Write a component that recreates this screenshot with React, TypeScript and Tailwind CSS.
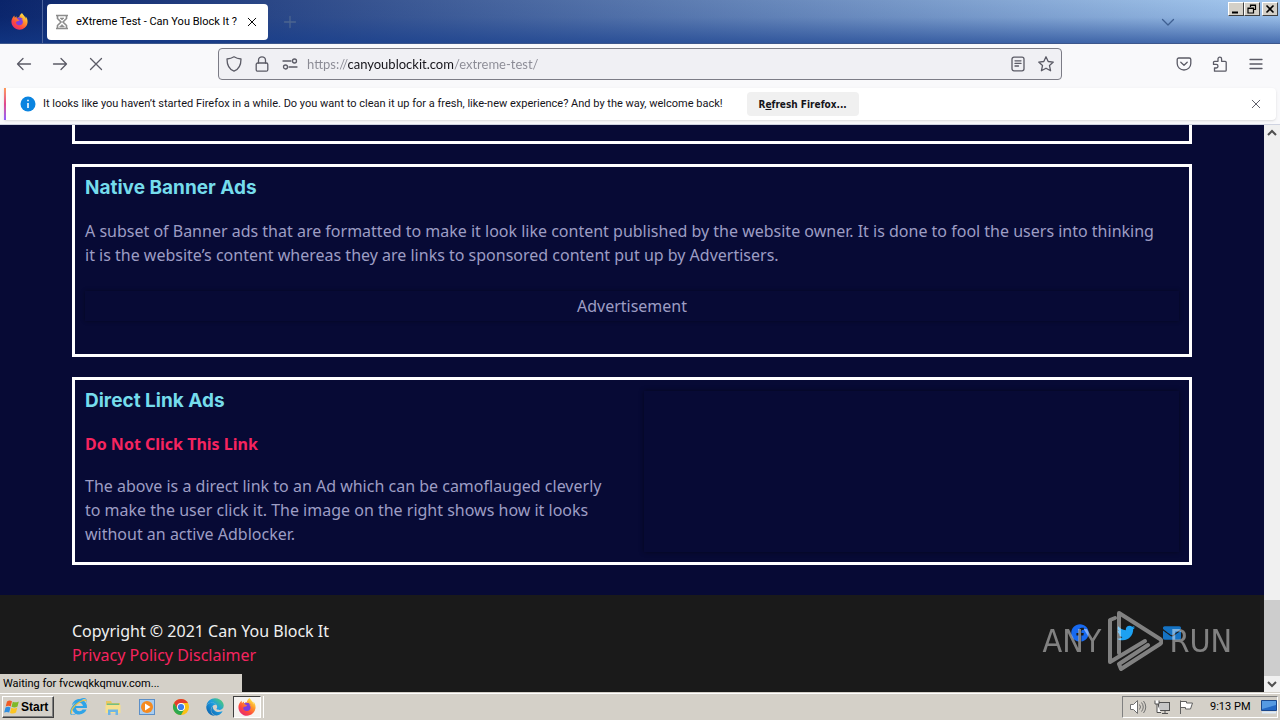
import React, { useState } from "react";
import { FaEdge, FaEnvelope, FaFacebook, FaFirefoxBrowser, FaInternetExplorer, FaTwitter } from "react-icons/fa";

const stroke = {
  fill: "none",
  stroke: "currentColor",
  strokeWidth: 1.3,
  strokeLinecap: "round" as const,
  strokeLinejoin: "round" as const,
};

function Icon({ children, className = "size-4" }: { children: React.ReactNode; className?: string }) {
  return (
    <svg viewBox="0 0 16 16" className={className} aria-hidden="true" {...stroke}>
      {children}
    </svg>
  );
}

function FirefoxLogo({ id, className }: { id: string; className: string }) {
  return (
    <svg viewBox="0 0 20 20" className={className} aria-hidden="true">
      <defs>
        <linearGradient id={id} x1="0.85" y1="0.05" x2="0.2" y2="0.95">
          <stop offset="0" stopColor="#fff44f" />
          <stop offset="0.35" stopColor="#ff9a2a" />
          <stop offset="0.7" stopColor="#ff4a3c" />
          <stop offset="1" stopColor="#e62a72" />
        </linearGradient>
      </defs>
      <circle cx="10" cy="10.5" r="5.5" fill="#7b3fe0" />
      <FaFirefoxBrowser size={20} fill={`url(#${id})`} />
    </svg>
  );
}

function ToolButton({ label, children }: { label: string; children: React.ReactNode }) {
  return (
    <button aria-label={label} className="flex size-9 items-center justify-center text-[#5b5b66]">
      {children}
    </button>
  );
}

function WindowButton({ label, children }: { label: string; children: React.ReactNode }) {
  return (
    <button
      aria-label={label}
      className="flex h-[14px] w-4 items-center justify-center border border-t-white border-l-white border-r-[#404040] border-b-[#404040] bg-[#d4d0c8] text-black"
    >
      <svg viewBox="0 0 12 10" className="h-[10px] w-3" fill="none" stroke="currentColor" strokeWidth="1.6" aria-hidden="true">
        {children}
      </svg>
    </button>
  );
}

function TabBar() {
  return (
    <header className="flex h-11 shrink-0 items-stretch border-b border-[#3d578c] bg-[linear-gradient(to_bottom,rgba(20,60,140,0)_0%,rgba(20,60,140,0.1)_40%,rgba(20,60,140,0.65)_100%),linear-gradient(to_right,#0a246a,#a6caf0)]">
      <button aria-label="Firefox View" className="flex w-[43px] items-center justify-center border-r border-[#4d659e] pr-1">
        <FirefoxLogo id="ff-view" className="size-[17px]" />
      </button>
      <div className="mt-1 mb-[3px] ml-1 flex w-[221px] items-center rounded bg-white pl-2 pr-2 text-black">
        <svg viewBox="0 0 14 16" className="h-4 w-[14px]" fill="none" stroke="#8c8c8c" strokeWidth="1.6" aria-hidden="true">
          <path d="M1 1.500h12M1 14.500h12M2.500 2v2.500L6 8l-3.500 3.500V14M11.500 2v2.500L8 8l3.500 3.500V14" />
          <path d="M5 4h4L7 6zM4.500 13L7 10.500 9.500 13z" fill="#8c8c8c" strokeWidth="0.6" />
        </svg>
        <span className="ml-[7px] flex-1 whitespace-nowrap">eXtreme Test - Can You Block It ?</span>
        <button aria-label="Close tab" className="flex size-4 items-center justify-center">
          <Icon className="size-3">
            <path d="M3 3l10 10M13 3L3 13" />
          </Icon>
        </button>
      </div>
      <button aria-label="New tab" className="flex w-11 items-center justify-center text-[#4c6590]">
        <Icon>
          <path d="M8 2.500v11M2.500 8h11" />
        </Icon>
      </button>
      <div className="flex-1" />
      <button aria-label="List all tabs" className="mr-[42px] flex w-9 items-center justify-center text-[#3f5f91]">
        <Icon>
          <path d="M2.500 5.500L8 11l5.500-5.500" />
        </Icon>
      </button>
      <div className="flex pt-[2px] pr-[2px]">
        <WindowButton label="Minimize">
          <path d="M2 8.500h6" strokeWidth="2" />
        </WindowButton>
        <WindowButton label="Restore">
          <path d="M4.500 3V1h5v4.500H8M4 1.500h6M2 4h5.500v5H2zM2 4.500h5.500" strokeWidth="1.200" />
        </WindowButton>
        <div className="w-[2px]" />
        <WindowButton label="Close">
          <path d="M2.500 1.500l7 7M9.500 1.500l-7 7" />
        </WindowButton>
      </div>
    </header>
  );
}

function Toolbar() {
  const [url, setUrl] = useState("https://canyoublockit.com/extreme-test/");
  return (
    <nav className="flex h-11 shrink-0 items-center bg-[#f9f9fb] px-[6px] pb-1">
      <ToolButton label="Back">
        <Icon>
          <path d="M14.500 8h-13M7 2.500L1.500 8 7 13.500" />
        </Icon>
      </ToolButton>
      <ToolButton label="Forward">
        <Icon>
          <path d="M1.500 8h13M9 2.500L14.500 8 9 13.500" />
        </Icon>
      </ToolButton>
      <ToolButton label="Stop">
        <Icon>
          <path d="M2.500 2.500l11 11M13.500 2.500l-11 11" />
        </Icon>
      </ToolButton>
      <div className="mr-[104px] ml-[104px] flex h-8 flex-1 items-center rounded border border-[#7c7c86] bg-[#f0f0f4] px-[7px] text-[#5b5b66]">
        <Icon>
          <path d="M8 .8c2 1.300 4.300 2 7 2.200 0 6.500-2 10.300-7 12.200C3 13.300 1 9.500 1 3 3.700 2.800 6 2.100 8 .8z" />
        </Icon>
        <Icon className="ml-3 size-4">
          <rect x="2.200" y="7" width="11.600" height="8.200" rx="1.500" />
          <path d="M4.500 7V4.300a3.500 3.500 0 0 1 7 0V7" />
        </Icon>
        <Icon className="ml-3 size-4">
          <path d="M1 5h8M7 11h8" />
          <circle cx="12.500" cy="5" r="2" />
          <circle cx="3.500" cy="11" r="2" />
        </Icon>
        <input
          aria-label="Address"
          value={url}
          onChange={(e) => setUrl(e.target.value)}
          className="ml-[9px] h-7 flex-1 bg-[linear-gradient(to_right,#8a8a94_41px,#15141a_41px,#15141a_147px,#8a8a94_147px)] bg-clip-text font-['Lato',sans-serif] text-[13px] text-transparent caret-black outline-none"
        />
        <Icon>
          <rect x="2" y="1.200" width="12" height="13.600" rx="2" />
          <path d="M5 4.800h6M5 7.400h6M5 10h3.500" />
        </Icon>
        <Icon className="ml-3 size-4">
          <path d="M8 .8l2.200 4.700 5.100.6-3.800 3.500 1.100 5.200L8 12.200l-4.600 2.600 1.100-5.200L.7 6.100l5.100-.6z" />
        </Icon>
      </div>
      <ToolButton label="Save to Pocket">
        <Icon>
          <path d="M2.800 2h10.400a1.600 1.600 0 0 1 1.600 1.600V7.500a6.800 6.500 0 0 1-13.600 0V3.600A1.600 1.600 0 0 1 2.800 2z" />
          <path d="M4.800 6.300L8 9.300l3.200-3" />
        </Icon>
      </ToolButton>
      <ToolButton label="Extensions">
        <Icon>
          <path d="M2.500 15.200V12h1.700a1.700 1.700 0 0 0 0-3.600H1.500V6.300a1 1 0 0 1 1-1H6V3a1.800 1.800 0 0 1 3.600 0v2.300h3.600a1 1 0 0 1 1 1v7.900a1 1 0 0 1-1 1z" />
        </Icon>
      </ToolButton>
      <ToolButton label="Open application menu">
        <Icon>
          <path d="M2 3.500h12M2 8h12M2 12.500h12" />
        </Icon>
      </ToolButton>
    </nav>
  );
}

function Notification() {
  return (
    <aside className="shrink-0 border-b border-[#cfd3e0] bg-[#f9f9fb] pr-1 pb-1 pl-1">
      <div className="flex h-8 items-center rounded-r bg-white shadow-sm">
        <div className="h-full w-[2px] bg-linear-to-b from-[#ff9a56] via-[#e0468c] to-[#9059ff]" />
        <svg viewBox="0 0 16 16" className="ml-[14px] size-4" aria-hidden="true">
          <circle cx="8" cy="8" r="7.500" fill="#0a84e0" />
          <path d="M8 7v5M8 3.800v1.400" stroke="white" strokeWidth="1.600" />
        </svg>
        <p className="ml-[7px] whitespace-nowrap text-[#15141a]">
          It looks like you haven’t started Firefox in a while. Do you want to clean it up for a fresh, like-new experience?
          And by the way, welcome back!
        </p>
        <button className="ml-6 h-6 w-28 rounded bg-[#f0f0f0] font-['DejaVu_Sans_Condensed','DejaVu_Sans',sans-serif] text-[10px] font-bold whitespace-nowrap text-[#15141a]">
          R<span className="underline">e</span>fresh Firefox...
        </button>
        <div className="flex-1" />
        <button aria-label="Dismiss" className="mr-3 flex size-4 items-center justify-center text-[#5b5b66]">
          <Icon className="size-3">
            <path d="M3 3l10 10M13 3L3 13" />
          </Icon>
        </button>
      </div>
    </aside>
  );
}

function CardTitle({ children }: { children: React.ReactNode }) {
  return <h2 className="mb-[21px] font-['Inter',sans-serif] text-[19px] leading-5 font-bold text-[#75dcec]">{children}</h2>;
}

function WebPage() {
  return (
    <div className="flex min-w-0 flex-1 flex-col bg-[#070a35] font-['Noto_Sans',sans-serif] text-[16px] leading-6 text-[#9d9dc4]">
      <main className="mx-auto flex w-full max-w-[1120px] flex-col gap-5">
        <section className="h-[19px] border-[3px] border-t-0 border-white" />
        <section className="border-[3px] border-white px-[10px] pt-[11px] pb-[33px]">
          <CardTitle>Native Banner Ads</CardTitle>
          <p className="pr-3">
            A subset of Banner ads that are formatted to make it look like content published by the website owner. It is done
            to fool the users into thinking it is the website’s content whereas they are links to sponsored content put up by
            Advertisers.
          </p>
          <div className="mt-6 py-[3px] text-center shadow-[0_0_4px_rgba(0,0,0,0.4)]">Advertisement</div>
        </section>
        <section className="flex justify-between border-[3px] border-white px-[10px] pt-[11px] pb-[10px]">
          <div className="w-[530px] pb-[6px]">
            <CardTitle>Direct Link Ads</CardTitle>
            <a href="#ad" className="mb-[18px] block font-bold text-[#f5245f]">
              Do Not Click This Link
            </a>
            <p>
              The above is a direct link to an Ad which can be camoflauged cleverly to make the user click it. The image on
              the right shows how it looks without an active Adblocker.
            </p>
          </div>
          <div className="w-[535px] shadow-[0_0_5px_rgba(0,0,0,0.45)]" />
        </section>
      </main>
      <footer className="mt-[30px] flex-1 bg-[#1a1a1a] pt-6">
        <div className="mx-auto flex w-full max-w-[1120px] justify-between">
          <div>
            <p className="text-[#f0f0f0]">Copyright © 2021 Can You Block It</p>
            <p className="text-[#f5245f]">
              <a href="#privacy">Privacy Policy</a> <a href="#disclaimer">Disclaimer</a>
            </p>
          </div>
          <div className="flex h-7 items-center gap-7 pr-[11px] text-[18px]">
            <a href="#facebook" aria-label="Facebook" className="text-[#1769f0]"><FaFacebook /></a>
            <a href="#twitter" aria-label="Twitter" className="text-[#1da1f2]"><FaTwitter /></a>
            <a href="#mail" aria-label="Email" className="text-[#1573c4]"><FaEnvelope /></a>
          </div>
        </div>
      </footer>
    </div>
  );
}

function Scrollbar() {
  return (
    <div className="flex w-4 shrink-0 flex-col bg-[#f0f0f0] text-[#505050]">
      <button aria-label="Scroll up" className="flex h-4 items-center justify-center">
        <svg viewBox="0 0 10 8" className="h-2 w-[10px]" fill="none" stroke="currentColor" strokeWidth="2" aria-hidden="true">
          <path d="M1 6l4-4 4 4" />
        </svg>
      </button>
      <div className="flex-1" />
      <div className="h-[76px] bg-[#cdcdcd]" />
      <button aria-label="Scroll down" className="flex h-4 items-center justify-center">
        <svg viewBox="0 0 10 8" className="h-2 w-[10px]" fill="none" stroke="currentColor" strokeWidth="2" aria-hidden="true">
          <path d="M1 2l4 4 4-4" />
        </svg>
      </button>
    </div>
  );
}

function Watermark() {
  return (
    <div className="pointer-events-none absolute right-[48px] bottom-[19px] flex h-16 items-center gap-[6px] font-['DejaVu_Sans_Condensed','DejaVu_Sans',sans-serif] text-[32px] leading-none text-white opacity-45">
      <span>ANY</span>
      <svg viewBox="0 0 56 64" className="h-16 w-14" fill="none" stroke="currentColor" strokeWidth="4" strokeLinejoin="round" strokeLinecap="round" aria-hidden="true">
        <path d="M12 44V4L53 30a3 3 0 0 1 0 5L14 60l-2-5 29-19" />
        <path d="M8 9L3 11v42l35-21" />
      </svg>
      <span>RUN</span>
    </div>
  );
}

function WindowsFlag() {
  return (
    <svg viewBox="0 0 16 16" className="size-4" aria-hidden="true">
      <path d="M3 2.500C5 1.200 6.500 1.500 8 2.300L6.700 7.500C5 6.600 3.500 6.700 1.700 7.600z" fill="#ef5b24" />
      <path d="M8.800 2.700c2 .9 3.800.9 6-.3L13.500 7.500c-2 1.200-3.800 1.200-6 .3z" fill="#7fb928" />
      <path d="M1.500 8.500c1.800-1 3.400-.9 5-.1L5.200 13.500c-1.600-.8-3.200-.9-5 .1z" fill="#2f8ee0" />
      <path d="M7.300 8.800c2 .9 3.800.9 6-.3L12 13.600c-2 1.200-3.800 1.200-6 .3z" fill="#fcc522" />
    </svg>
  );
}

function TaskButton({ label, children }: { label: string; children: React.ReactNode }) {
  return (
    <button aria-label={label} className="flex w-[34px] items-center justify-center">
      {children}
    </button>
  );
}

function Taskbar() {
  return (
    <footer className="flex h-7 shrink-0 items-stretch border-t border-[#d4d0c8] bg-[#d4d0c8] text-black">
      <div className="flex flex-1 items-stretch border-t border-white pt-[2px] pr-[2px] pb-[2px] pl-[2px]">
        <button className="flex w-[52px] items-center gap-[1px] border border-t-white border-l-white border-r-[#404040] border-b-[#404040] pl-[1px] font-['Liberation_Sans',sans-serif] text-[12px] font-bold shadow-[inset_-1px_-1px_0_#808080]">
          <WindowsFlag />
          Start
        </button>
        <div className="w-2" />
        <TaskButton label="Internet Explorer">
          <svg viewBox="0 0 18 18" className="size-[18px]" aria-hidden="true">
            <FaInternetExplorer size={17} fill="#2fa4e7" />
            <path d="M1.500 15.500C.5 13 3 8.500 7.500 5.500 11 3 15 1.200 16.300 2.800" fill="none" stroke="#e8c24a" strokeWidth="1.300" />
          </svg>
        </TaskButton>
        <TaskButton label="File Explorer">
          <svg viewBox="0 0 18 18" className="size-[18px]" aria-hidden="true">
            <path d="M2 3h5l1 2h8v10H2z" fill="#e9c860" />
            <path d="M3 5.500h12V9H3z" fill="#73bf84" />
            <path d="M1.500 7h15v8h-15z" fill="#f7e08d" />
            <path d="M4 17v-5.500h10V17h-2.500v-3h-5v3z" fill="#6eb5e4" />
          </svg>
        </TaskButton>
        <TaskButton label="Media Player">
          <svg viewBox="0 0 18 18" className="size-[18px]" aria-hidden="true">
            <rect x="1.500" y="1.500" width="15" height="15" fill="#a9cdf0" stroke="#5c8fc7" />
            <circle cx="9" cy="9" r="6" fill="#f58a1f" />
            <path d="M7 5.500v7l5.500-3.500z" fill="white" />
          </svg>
        </TaskButton>
        <TaskButton label="Chrome">
          <svg viewBox="0 0 18 18" className="size-[18px]" aria-hidden="true">
            <circle cx="9" cy="9" r="8" fill="#fbc116" />
            <path d="M9 5h6.930a8 8 0 0 0-13.860 0L5.540 11z" fill="#e33b2e" />
            <path d="M2.070 5A8 8 0 0 0 9 17l3.460-6H5.540z" fill="#2da94f" />
            <circle cx="9" cy="9" r="4" fill="white" />
            <circle cx="9" cy="9" r="3.100" fill="#3b7ded" />
          </svg>
        </TaskButton>
        <TaskButton label="Edge">
          <svg viewBox="0 0 18 18" className="size-[18px]" aria-hidden="true">
            <defs>
              <linearGradient id="edge" x1="0" y1="1" x2="1" y2="0">
                <stop offset="0" stopColor="#0c59a4" />
                <stop offset="0.55" stopColor="#1b9de2" />
                <stop offset="1" stopColor="#5bd75b" />
              </linearGradient>
            </defs>
            <FaEdge size={18} fill="url(#edge)" />
          </svg>
        </TaskButton>
        <button
          aria-label="Firefox"
          className="ml-[1px] flex w-7 items-center justify-center border border-t-[#404040] border-l-[#404040] border-r-white border-b-white bg-[#f5f3f0]"
        >
          <FirefoxLogo id="ff-task" className="size-[18px]" />
        </button>
        <div className="ml-[1px] w-[2px] border-r border-white bg-[#d4d0c8]" />
        <div className="flex-1" />
        <div className="flex w-[156px] items-center border border-t-[#808080] border-l-[#808080] border-r-white border-b-white pl-[6px]">
          <svg viewBox="0 0 18 16" className="h-4 w-[18px]" fill="white" stroke="#707070" aria-hidden="true">
            <path d="M1.500 5.500h3l4-4v13l-4-4h-3z" />
            <path d="M10.500 5.500q2 2.500 0 5M12.500 3.500q3.500 4.500 0 9M14.500 2q4.500 6 0 12" fill="none" />
          </svg>
          <svg viewBox="0 0 16 16" className="ml-[7px] size-4" fill="white" stroke="#505050" aria-hidden="true">
            <rect x="4.500" y="3.500" width="11" height="8" fill="#c6c6c6" />
            <path d="M8 14.500h6M11 12v2M1 1.500v3.500h4V1.500M3 5v8.500h4" />
          </svg>
          <svg viewBox="0 0 16 16" className="ml-2 size-4" fill="white" stroke="#606060" aria-hidden="true">
            <path d="M2.500 15V1.500M2.500 2.500h6v1.500h6l-2 6H7.500V8.500h-5z" />
          </svg>
          <span className="ml-4 flex-1 whitespace-nowrap">9:13 PM</span>
          <svg viewBox="0 0 16 14" className="h-[14px] w-4" aria-hidden="true">
            <path d="M.5.500h15v10H.5z" fill="#2367c4" stroke="#1a478c" />
            <path d="M1 1h14v4L1 9z" fill="#5599e2" />
            <path d="M1 12.500h14" stroke="#ddebf8" strokeWidth="2" />
          </svg>
        </div>
      </div>
    </footer>
  );
}

export default function App() {
  return (
    <div className="flex h-screen flex-col overflow-hidden font-['Roboto',sans-serif] text-[11px]">
      <TabBar />
      <Toolbar />
      <Notification />
      <div className="relative flex min-h-0 flex-1 overflow-hidden">
        <WebPage />
        <Scrollbar />
        <Watermark />
        <div role="status" className="absolute bottom-0 left-0 h-[18px] w-[242px] bg-[#d4d0c8] pl-[3px] leading-5 text-black">
          Waiting for fvcwqkkqmuv.com...
        </div>
      </div>
      <Taskbar />
    </div>
  );
}
